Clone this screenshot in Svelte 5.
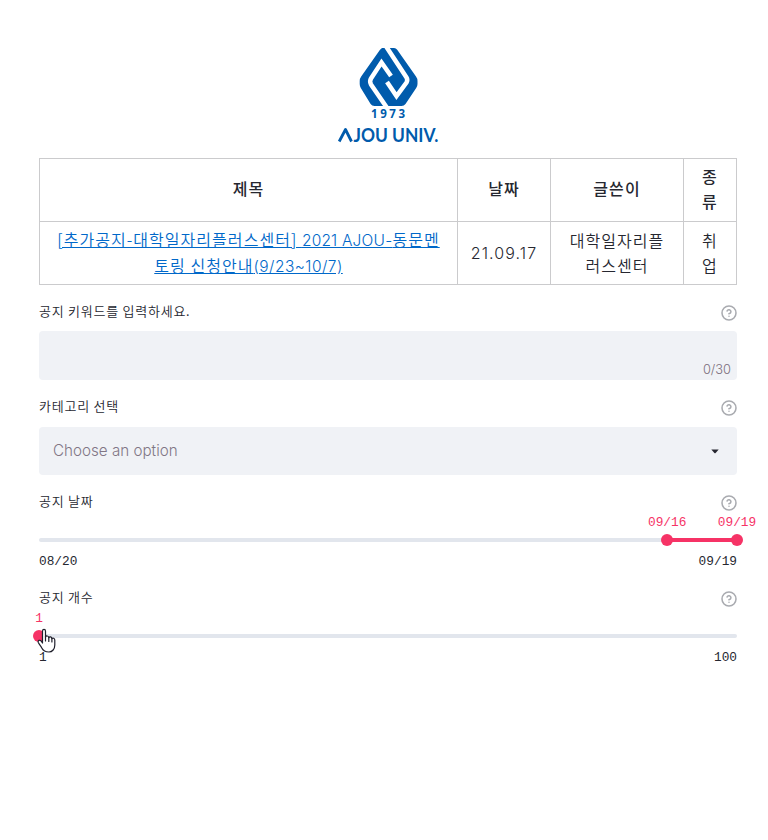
<script>
  const rows = [
    { title: ['[추가공지-대학일자리플러스센터] ', '2021 AJOU-', '동문멘', '토링 신청안내', '(9/23~10/7)'], date: '21.09.17', author: ['대학일자리플', '러스센터'], kind: ['취', '업'] }
  ];
</script>

{#snippet help()}
  <svg class="help" width="16" height="16" viewBox="0 0 24 24" fill="none" stroke="#a9abb0" stroke-width="2.300" stroke-linecap="round" stroke-linejoin="round">
    <circle cx="12" cy="12" r="10.500" />
    <path d="M9.09 9a3 3 0 0 1 5.83 1c0 2-3 3-3 3M12 17h.01" />
  </svg>
{/snippet}

<main>
  <svg class="logo" width="104" height="98" viewBox="336 46 104 98" fill="#005bac">
    <path d="M382 48H394Q396 48 397.200 49.800L416 76.500Q417.500 78.500 417.500 81V84Q417.500 86 416.200 88L405.500 104Q404 106 401.500 106H374.500Q372 106 370.600 104L360.800 88Q359.700 86 359.700 84V81Q359.700 78.500 361.200 76.500L380 49.800Z" />
    <g fill="none" stroke="#fff" stroke-width="4.500">
      <path d="M384.500 44L406.500 77.500Q408 80 406.500 82.500L396.500 96L387 82" />
      <path d="M388.500 110L371 84.500Q369.200 81.500 371 78.500L381.500 62.500L391 76" />
    </g>
    <text x="371" y="118" font-size="11.500" textLength="34">1973</text>
    <path d="M339.200 141.500L345.500 129.500L351.500 141.500" fill="none" stroke="#005bac" stroke-width="2.800" stroke-linejoin="round" />
    <text class="name" x="353.500" y="141.500" font-size="18.500" textLength="85" lengthAdjust="spacingAndGlyphs">JOU UNIV.</text>
  </svg>

  <table>
    <colgroup><col style:width="418px" /><col style:width="93px" /><col style:width="133px" /><col style:width="53px" /></colgroup>
    <thead>
      <tr><th>제목</th><th>날짜</th><th>글쓴이</th><th>종<br />류</th></tr>
    </thead>
    <tbody>
      {#each rows as r}
        <tr>
          <td><a href="#notice">{r.title[0]}<span class="lat">{r.title[1]}</span>{r.title[2]}<br />{r.title[3]}<span class="lat wide">{r.title[4]}</span></a></td>
          <td><span class="lat date">{r.date}</span></td>
          <td>{r.author[0]}<br />{r.author[1]}</td>
          <td>{r.kind[0]}<br />{r.kind[1]}</td>
        </tr>
      {/each}
    </tbody>
  </table>

  <section class="first">
    <div class="label"><span>공지 키워드를 입력하세요.</span>{@render help()}</div>
    <div class="field input"><span class="count">0/30</span></div>
  </section>

  <section>
    <div class="label"><span>카테고리 선택</span>{@render help()}</div>
    <div class="field select">
      <span class="placeholder">Choose an option</span>
      <svg width="8" height="5" viewBox="0 0 8 5"><path d="M.3.6h7.400L4.600 3.900Q4 4.500 3.400 3.900Z" fill="#262730" /></svg>
    </div>
  </section>

  <section class="dates">
    <div class="label"><span>공지 날짜</span>{@render help()}</div>
    <div class="slider">
      <div class="track"></div>
      <div class="range" style:left="90%"></div>
      <div class="thumb" style:left="90%"><span>09/16</span></div>
      <div class="thumb" style:left="100%"><span>09/19</span></div>
    </div>
    <div class="ticks"><span>08/20</span><span>09/19</span></div>
  </section>

  <section>
    <div class="label"><span>공지 개수</span>{@render help()}</div>
    <div class="slider">
      <div class="track"></div>
      <div class="thumb" style:left="0%"><span>1</span></div>
      <svg class="cursor" width="20" height="26" viewBox="0 0 20 26" fill="#fff" stroke="#20202c" stroke-width="1.200" stroke-linejoin="round" stroke-linecap="round">
        <path d="M5.500 15V3.200C5.500.8 8.500.8 8.500 3.200V9C9 7.500 11.500 7.600 11.800 9.600C12.600 8.300 14.700 8.800 14.900 10.600C15.800 9.600 17.800 10.200 17.800 12.200V17C17.800 21 15.300 24 12 24C8 24 6 22.500 4.800 20C3.600 17.700 2.300 16.500 1.300 14.500C.5 12.300 3 11.500 4.200 13.200Z" />
        <path d="M8.500 8.500V13M11.800 9.600V13.500M14.900 10.600V14" fill="none" />
      </svg>
    </div>
    <div class="ticks"><span>1</span><span>100</span></div>
  </section>
</main>

<style>
  :global(body) { margin: 0; background: #fff; overflow: hidden; }
  main {
    box-sizing: border-box;
    width: 768px;
    height: 840px;
    padding: 46px 31px 0 39px;
    font-family: "Noto Sans CJK KR", sans-serif;
    font-size: 16px;
    line-height: 25.600px;
    color: #262730;
    overflow: hidden;
  }
  .logo { display: block; margin: 0 auto; overflow: visible; font-family: "Open Sans", sans-serif; font-weight: 700; }
  .name { font-family: "Lato", sans-serif; font-weight: 700; }
  table { width: 698px; margin-top: 14px; table-layout: fixed; border-collapse: collapse; letter-spacing: 1.050px; font-weight: 350; }
  th, td { box-sizing: border-box; height: 63px; padding: 0 0 1px; text-align: center; vertical-align: middle; border: 1px solid #cbcbcd; line-height: 25px; }
  th { font-weight: 500; padding-bottom: 3px; }
  .lat { font-family: "Inter", sans-serif; font-size: 15.500px; letter-spacing: 0.200px; }
  .wide { letter-spacing: 0.450px; }
  .date { font-size: 16px; letter-spacing: 1.100px; }
  a { color: #0068c9; text-decoration: underline; }
  .first { margin-top: 13px; }
  section { height: 95px; }
  .dates { height: 96px; }
  .label { display: flex; justify-content: space-between; align-items: center; height: 26px; font-size: 13px; font-weight: 350; letter-spacing: 0.750px; }
  .help { display: block; position: relative; top: 2px; }
  .field { box-sizing: border-box; height: 48px; margin-top: 8px; border-radius: 4px; background: #f0f2f6; display: flex; }
  .input { height: 49px; margin-top: 7px; justify-content: flex-end; align-items: flex-end; padding: 0 6px 0 0; }
  .count { font: 300 12.800px/20px "Inter", sans-serif; color: #7b6f7c; }
  .select { align-items: center; justify-content: space-between; padding: 0 18px 0 14px; }
  .placeholder { font: 300 15.200px/24px "Inter", sans-serif; color: #817685; }
  .slider { position: relative; height: 4px; margin-top: 24px; }
  .track { height: 4px; border-radius: 2px; background: #e2e6ed; }
  .range { position: absolute; top: 0; right: 0; height: 4px; background: #f63366; }
  .thumb { position: absolute; top: -4px; width: 12px; height: 12px; margin-left: -6px; border-radius: 50%; background: #f63366; display: flex; justify-content: center; }
  .thumb span { position: absolute; top: -19px; font: 12.800px/16px "Liberation Mono", monospace; color: #f63366; }
  .ticks { display: flex; justify-content: space-between; margin-top: 12px; font: 12.800px/16px "Liberation Mono", monospace; }
  .cursor { position: absolute; left: -2px; top: -6px; }
</style>
